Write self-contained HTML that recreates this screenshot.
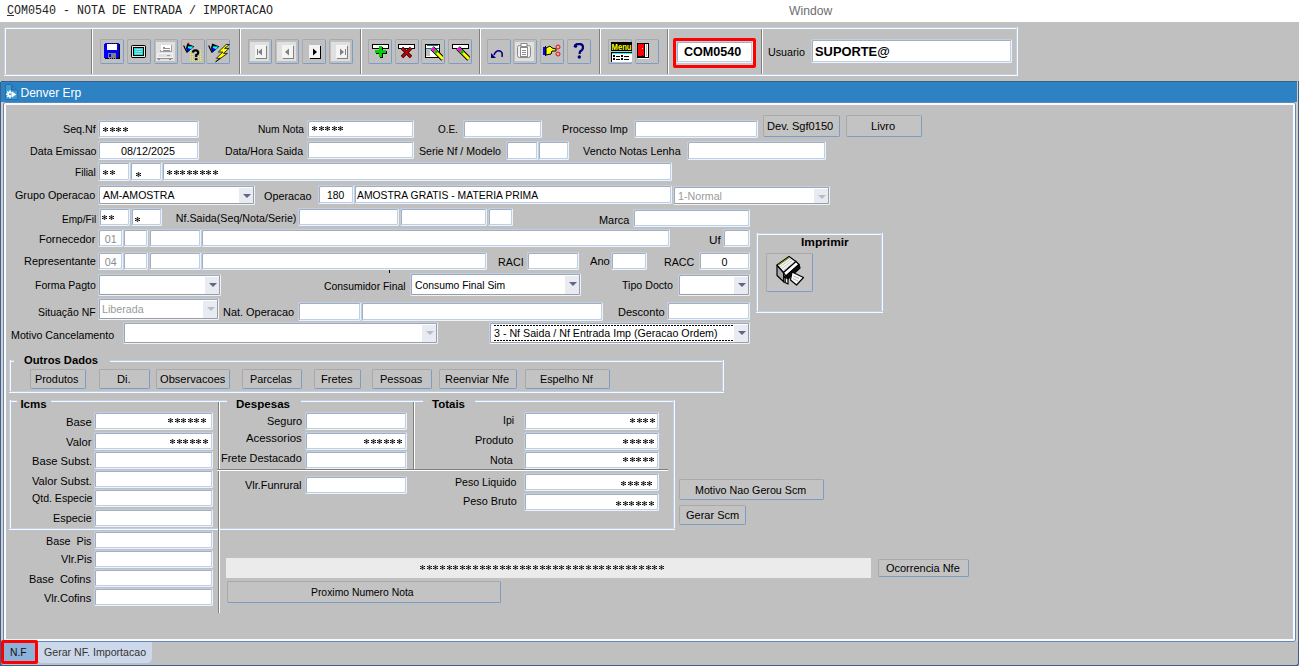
<!DOCTYPE html>
<html><head><meta charset="utf-8"><title>COM0540</title>
<style>
html,body{margin:0;padding:0;}
body{width:1299px;height:666px;overflow:hidden;position:relative;background:#c0c0c0;font-family:"Liberation Sans",sans-serif;font-size:10.7px;color:#000;}
div,svg{position:absolute;box-sizing:border-box;}
.l{white-space:pre;line-height:13px;}
.ln{}
.f{background:#fff;border:1px solid;border-color:#bdd0ea #eef3f9 #eef3f9 #bdd0ea;box-shadow:inset 1px 1px 0 #a9aeb6,inset -1px -1px 0 #bdd0ea;border-radius:2px;}
.arr{background:#e8ebf2;}
.cbx{background:#fff;border:1px solid;border-color:#bdd0ea #eef3f9 #eef3f9 #bdd0ea;box-shadow:inset 1px 1px 0 #a4a7ad,inset -1px -1px 0 #9a9da3;border-radius:2px;}
.fdot{background:repeating-linear-gradient(90deg,#000 0 2px,transparent 2px 3px);}
.arr i{position:absolute;left:4px;top:6px;width:0;height:0;border-left:4px solid transparent;border-right:4px solid transparent;border-top:4px solid #646680;}
.arr.ad i{border-top-color:#b9bcc6;}
.foc{border:1px dashed #000;}
.b{background:#c3c3c3;border:1px solid;border-color:#a9a9a9 #7c9cc4 #7c9cc4 #a9a9a9;border-radius:2px;}
.tb{background:#c0c0c0;border:1px solid;border-color:#a9a9a9 #7c9cc4 #7c9cc4 #a9a9a9;border-radius:2px;}
.s{overflow:visible;}
</style></head><body>
<svg width="0" height="0" style="position:absolute"><defs>
<g id="st"><rect x="1" y="0" width="1" height="1" fill="rgb(217,217,217)"/><rect x="2" y="0" width="1" height="1" fill="rgb(64,64,64)"/><rect x="3" y="0" width="1" height="1" fill="rgb(217,217,217)"/><rect x="0" y="1" width="1" height="1" fill="rgb(13,13,13)"/><rect x="1" y="1" width="1" height="1" fill="rgb(115,115,115)"/><rect x="2" y="1" width="1" height="1" fill="rgb(102,102,102)"/><rect x="3" y="1" width="1" height="1" fill="rgb(115,115,115)"/><rect x="4" y="1" width="1" height="1" fill="rgb(13,13,13)"/><rect x="0" y="2" width="1" height="1" fill="rgb(230,230,230)"/><rect x="1" y="2" width="1" height="1" fill="rgb(115,115,115)"/><rect x="2" y="2" width="1" height="1" fill="rgb(0,0,0)"/><rect x="3" y="2" width="1" height="1" fill="rgb(115,115,115)"/><rect x="4" y="2" width="1" height="1" fill="rgb(230,230,230)"/><rect x="0" y="3" width="1" height="1" fill="rgb(13,13,13)"/><rect x="1" y="3" width="1" height="1" fill="rgb(115,115,115)"/><rect x="2" y="3" width="1" height="1" fill="rgb(102,102,102)"/><rect x="3" y="3" width="1" height="1" fill="rgb(115,115,115)"/><rect x="4" y="3" width="1" height="1" fill="rgb(13,13,13)"/><rect x="1" y="4" width="1" height="1" fill="rgb(217,217,217)"/><rect x="2" y="4" width="1" height="1" fill="rgb(64,64,64)"/><rect x="3" y="4" width="1" height="1" fill="rgb(217,217,217)"/></g>
</defs></svg>
<div style="left:0;top:0;width:1299px;height:22px;background:#fff"></div>
<div class="l" style="top:5px;left:7.00px;transform:scaleX(0.9808);transform-origin:0 0;color:#222;font-family:'Liberation Mono';font-size:11.9px;">COM0540 - NOTA DE ENTRADA / IMPORTACAO</div>
<div class="ln" style="left:7px;top:15px;width:7px;height:1px;background:#333"></div>
<div class="l" style="top:5px;left:789.00px;transform:scaleX(0.9955);transform-origin:0 0;color:#6d6d6d;font-size:12.2px;">Window</div>
<div class="ln" style="left:4px;top:27px;width:1014px;height:1px;background:#bccfe8"></div>
<div class="ln" style="left:4px;top:27px;width:1px;height:49px;background:#bccfe8"></div>
<div class="ln" style="left:4px;top:75px;width:1014px;height:1px;background:#f7faff"></div>
<div class="ln" style="left:1017px;top:27px;width:1px;height:49px;background:#f7faff"></div>
<div class="ln" style="left:5px;top:28px;width:1012px;height:1px;background:#f7faff"></div>
<div class="ln" style="left:5px;top:28px;width:1px;height:47px;background:#f7faff"></div>
<div class="ln" style="left:5px;top:74px;width:1012px;height:1px;background:#bccfe8"></div>
<div class="ln" style="left:1016px;top:28px;width:1px;height:47px;background:#bccfe8"></div>
<div class="ln" style="left:91px;top:29px;width:1px;height:45px;background:#808080"></div>
<div class="ln" style="left:92px;top:29px;width:1px;height:45px;background:#ffffff"></div>
<div class="ln" style="left:239px;top:29px;width:1px;height:45px;background:#808080"></div>
<div class="ln" style="left:240px;top:29px;width:1px;height:45px;background:#ffffff"></div>
<div class="ln" style="left:360px;top:29px;width:1px;height:45px;background:#808080"></div>
<div class="ln" style="left:361px;top:29px;width:1px;height:45px;background:#ffffff"></div>
<div class="ln" style="left:479px;top:29px;width:1px;height:45px;background:#808080"></div>
<div class="ln" style="left:480px;top:29px;width:1px;height:45px;background:#ffffff"></div>
<div class="ln" style="left:599px;top:29px;width:1px;height:45px;background:#808080"></div>
<div class="ln" style="left:600px;top:29px;width:1px;height:45px;background:#ffffff"></div>
<div class="ln" style="left:667px;top:29px;width:1px;height:45px;background:#808080"></div>
<div class="ln" style="left:668px;top:29px;width:1px;height:45px;background:#ffffff"></div>
<div class="ln" style="left:761px;top:29px;width:1px;height:45px;background:#808080"></div>
<div class="ln" style="left:762px;top:29px;width:1px;height:45px;background:#ffffff"></div>
<div class="tb" style="left:100px;top:39px;width:24px;height:25px;"></div>
<div class="tb" style="left:127px;top:39px;width:24px;height:25px;"></div>
<div class="tb" style="left:154px;top:39px;width:24px;height:25px;"></div>
<div class="tb" style="left:181px;top:39px;width:24px;height:25px;"></div>
<div class="tb" style="left:206px;top:39px;width:24px;height:25px;"></div>
<div class="tb" style="left:248px;top:39px;width:24px;height:25px;"></div>
<div class="tb" style="left:275px;top:39px;width:24px;height:25px;"></div>
<div class="tb" style="left:302px;top:39px;width:24px;height:25px;"></div>
<div class="tb" style="left:329px;top:39px;width:24px;height:25px;"></div>
<div class="tb" style="left:368px;top:39px;width:24px;height:25px;"></div>
<div class="tb" style="left:395px;top:39px;width:24px;height:25px;"></div>
<div class="tb" style="left:421px;top:39px;width:24px;height:25px;"></div>
<div class="tb" style="left:448px;top:39px;width:24px;height:25px;"></div>
<div class="tb" style="left:487px;top:39px;width:24px;height:25px;"></div>
<div class="tb" style="left:513px;top:39px;width:24px;height:25px;"></div>
<div class="tb" style="left:540px;top:39px;width:24px;height:25px;"></div>
<div class="tb" style="left:567px;top:39px;width:24px;height:25px;"></div>
<div class="tb" style="left:608px;top:39px;width:24px;height:25px;"></div>
<div class="tb" style="left:635px;top:39px;width:24px;height:25px;"></div>
<div style="left:156px;top:42px;width:19px;height:19px;background:#e0e0e0"></div>
<div style="left:250px;top:42px;width:19px;height:19px;background:#e0e0e0"></div>
<div style="left:277px;top:42px;width:19px;height:19px;background:#e0e0e0"></div>
<div style="left:331px;top:42px;width:19px;height:19px;background:#e0e0e0"></div>
<div style="left:515px;top:42px;width:19px;height:19px;background:#e0e0e0"></div>
<svg style="left:104px;top:43px;" width="17" height="17" shape-rendering="crispEdges"><rect x="0" y="0" width="16" height="16" fill="#000"/><rect x="0" y="0" width="15" height="15" fill="#0000ff"/><rect x="3" y="1" width="10" height="6" fill="#fff"/><rect x="4" y="0" width="1" height="1" fill="#000"/><rect x="6" y="0" width="1" height="1" fill="#000"/><rect x="8" y="0" width="1" height="1" fill="#000"/><rect x="10" y="0" width="1" height="1" fill="#000"/><rect x="12" y="0" width="1" height="1" fill="#000"/><rect x="1" y="3" width="1" height="1" fill="#000"/><rect x="4" y="10" width="8" height="6" fill="#808080"/><rect x="5" y="11" width="2" height="3" fill="#0000ff"/><rect x="4" y="15" width="1" height="1" fill="#000"/><rect x="6" y="15" width="1" height="1" fill="#000"/><rect x="8" y="15" width="1" height="1" fill="#000"/><rect x="10" y="15" width="1" height="1" fill="#000"/><rect x="0" y="0" width="1" height="1" fill="#c0c0c0"/><rect x="15" y="0" width="1" height="1" fill="#c0c0c0"/><rect x="0" y="15" width="1" height="1" fill="#c0c0c0"/></svg>
<svg style="left:131px;top:45px;shape-rendering:auto" width="15" height="13" shape-rendering="crispEdges"><rect x="0" y="0" width="15" height="13" rx="2" fill="#000"/><rect x="1" y="1" width="13" height="11" fill="#e8e8e8"/><rect x="2" y="2" width="11" height="9" fill="#000"/><rect x="3" y="3" width="9" height="7" fill="#00e8e8"/><rect x="4" y="4" width="7" height="1" fill="#c8c8c8"/><rect x="4" y="6" width="7" height="1" fill="#c8c8c8"/><rect x="4" y="8" width="7" height="1" fill="#c8c8c8"/></svg>
<svg style="left:157px;top:44px;" width="16" height="16" shape-rendering="crispEdges"><rect x="4" y="1" width="11" height="7" fill="#fff"/><rect x="4" y="7" width="11" height="1" fill="#a0a0a0"/><rect x="3" y="6" width="1" height="2" fill="#a0a0a0"/><rect x="14" y="1" width="1" height="7" fill="#a0a0a0"/><rect x="6" y="3" width="2" height="1" fill="#909090"/><rect x="6" y="4" width="7" height="1" fill="#909090"/><rect x="6" y="6" width="7" height="1" fill="#909090"/><rect x="0" y="9" width="16" height="5" fill="#f4f4f4"/><rect x="1" y="10" width="14" height="3" fill="#e0e0e0"/><rect x="10" y="11" width="3" height="1" fill="#a0a0a0"/><rect x="0" y="14" width="16" height="1" fill="#909090"/><rect x="1" y="15" width="2" height="1" fill="#909090"/><rect x="12" y="15" width="2" height="1" fill="#909090"/></svg>
<svg style="left:181px;top:39px;shape-rendering:auto" width="24" height="24" shape-rendering="crispEdges"><path d="M2.6 6.6 L6 13.6" stroke="#000" stroke-width="1.2"/><path d="M6.2 4.6 L13.4 7.6 L6.2 13.8 L5 9 Z" fill="#000"/><path d="M5.9 8.6 L10.2 10.2 L6.6 13 Z" fill="#0000ff"/><path d="M7.2 7.2 L12.4 7.6 L10 10.2 L6.8 9 Z" fill="#00ffff"/><circle cx="7.4" cy="4.3" r="0.9" fill="#ff0000"/><rect x="9" y="11" width="1" height="1" fill="#ffff00"/><rect x="9" y="13" width="1" height="1" fill="#ffff00"/><rect x="9" y="15" width="1" height="1" fill="#ffff00"/><rect x="9" y="17" width="1" height="1" fill="#ffff00"/><rect x="9" y="19" width="1" height="1" fill="#ffff00"/><rect x="9" y="21" width="1" height="1" fill="#ffff00"/><rect x="11" y="11" width="1" height="1" fill="#ffff00"/><rect x="11" y="13" width="1" height="1" fill="#ffff00"/><rect x="11" y="15" width="1" height="1" fill="#ffff00"/><rect x="11" y="17" width="1" height="1" fill="#ffff00"/><rect x="11" y="19" width="1" height="1" fill="#ffff00"/><rect x="11" y="21" width="1" height="1" fill="#ffff00"/><rect x="13" y="11" width="1" height="1" fill="#ffff00"/><rect x="13" y="21" width="1" height="1" fill="#ffff00"/><rect x="15" y="11" width="1" height="1" fill="#ffff00"/><rect x="15" y="21" width="1" height="1" fill="#ffff00"/><rect x="17" y="11" width="1" height="1" fill="#ffff00"/><rect x="17" y="13" width="1" height="1" fill="#ffff00"/><rect x="17" y="15" width="1" height="1" fill="#ffff00"/><rect x="17" y="17" width="1" height="1" fill="#ffff00"/><rect x="17" y="19" width="1" height="1" fill="#ffff00"/><rect x="17" y="21" width="1" height="1" fill="#ffff00"/><rect x="19" y="11" width="1" height="1" fill="#ffff00"/><rect x="19" y="13" width="1" height="1" fill="#ffff00"/><rect x="19" y="15" width="1" height="1" fill="#ffff00"/><rect x="19" y="17" width="1" height="1" fill="#ffff00"/><rect x="19" y="19" width="1" height="1" fill="#ffff00"/><rect x="19" y="21" width="1" height="1" fill="#ffff00"/><path d="M11.8 13.6 Q12 11.4 14.6 11.4 Q17.4 11.4 17.2 13.8 Q17 15.4 15.2 16 L15.2 18" fill="none" stroke="#000" stroke-width="2.2"/><rect x="13.9" y="19.2" width="2.6" height="2" fill="#000"/></svg>
<svg style="left:206px;top:39px;shape-rendering:auto" width="24" height="24" shape-rendering="crispEdges"><path d="M2.6 6.6 L6 13.6" stroke="#000" stroke-width="1.2"/><path d="M6.2 4.6 L13.4 7.6 L6.2 13.8 L5 9 Z" fill="#000"/><path d="M5.9 8.6 L10.2 10.2 L6.6 13 Z" fill="#0000ff"/><path d="M7.2 7.2 L12.4 7.6 L10 10.2 L6.8 9 Z" fill="#00ffff"/><path d="M20.2 5.5 L12.4 13 L16.8 13 L10.2 19.4 L14.2 19.4 L9.6 22.8 L21.4 14.4 L17.4 14.4 L23 9.4 L18.6 9.4 L23.4 5.5 Z" fill="#ffff00" stroke="#000" stroke-width="0.8" stroke-linejoin="round"/><path d="M13.2 13.4 L11.4 14.2 M11 18.8 L9.4 19.4" stroke="#909090" stroke-width="1"/></svg>
<svg style="left:255px;top:45px;" width="13" height="15" shape-rendering="crispEdges"><rect x="0" y="0" width="11" height="13" fill="#f4f4f4"/><rect x="11" y="1" width="1" height="13" fill="#808080"/><rect x="1" y="13" width="11" height="1" fill="#808080"/><rect x="2" y="4" width="1" height="6" fill="#808080"/><path d="M3 7 L7 3.5 L7 10.5 Z" fill="#808080" shape-rendering="auto"/></svg>
<svg style="left:282px;top:45px;" width="13" height="15" shape-rendering="crispEdges"><rect x="0" y="0" width="11" height="13" fill="#f4f4f4"/><rect x="11" y="1" width="1" height="13" fill="#808080"/><rect x="1" y="13" width="11" height="1" fill="#808080"/><path d="M3 7 L7 3.5 L7 10.5 Z" fill="#808080" shape-rendering="auto"/></svg>
<svg style="left:309px;top:45px;" width="13" height="15" shape-rendering="crispEdges"><rect x="0" y="0" width="11" height="13" fill="#f4f4f4"/><rect x="11" y="1" width="1" height="13" fill="#000"/><rect x="1" y="13" width="11" height="1" fill="#000"/><path d="M8 7 L4 3.5 L4 10.5 Z" fill="#000" shape-rendering="auto"/></svg>
<svg style="left:336px;top:45px;" width="13" height="15" shape-rendering="crispEdges"><rect x="0" y="0" width="11" height="13" fill="#f4f4f4"/><rect x="11" y="1" width="1" height="13" fill="#808080"/><rect x="1" y="13" width="11" height="1" fill="#808080"/><rect x="9" y="4" width="1" height="6" fill="#808080"/><path d="M8 7 L4 3.5 L4 10.5 Z" fill="#808080" shape-rendering="auto"/></svg>
<svg style="left:372px;top:44px;" width="18" height="15" shape-rendering="crispEdges"><rect x="0" y="0" width="17" height="5" fill="#000"/><rect x="1" y="1" width="15" height="3" fill="#fff"/><path d="M7 2 h3 v4 h4 v3 h-4 v4 h-3 v-4 h-4 v-3 h4z" fill="#000" transform="translate(0.5 0.5)"/><path d="M7 2 h3 v4 h4 v3 h-4 v4 h-3 v-4 h-4 v-3 h4z" fill="#00d000"/></svg>
<svg style="left:398px;top:44px;" width="18" height="15" shape-rendering="crispEdges"><rect x="0" y="0" width="17" height="5" fill="#000"/><rect x="1" y="1" width="15" height="3" fill="#fff"/><path d="M4 4 L13 13 M13 4 L4 13" stroke="#000" stroke-width="3.2" shape-rendering="auto"/><path d="M4 4 L13 13 M13 4 L4 13" stroke="#c00000" stroke-width="2.2" shape-rendering="auto"/></svg>
<svg style="left:425px;top:44px;" width="18" height="18" shape-rendering="crispEdges"><rect x="0" y="0" width="15" height="14" fill="#000"/><rect x="1" y="1" width="13" height="12" fill="#fff"/><rect x="2" y="1" width="11" height="1" fill="#008080"/><rect x="1" y="4" width="13" height="1" fill="#008080"/><rect x="1" y="5" width="4" height="7" fill="#c0c0c0"/><g transform="translate(2 0)"><path d="M5 4 L16 15" stroke="#000" stroke-width="5" shape-rendering="auto"/><path d="M5 4 L16 15" stroke="#ffff00" stroke-width="3" shape-rendering="auto"/><path d="M5 4 L8 7" stroke="#ff00ff" stroke-width="3" shape-rendering="auto"/><path d="M8 7 L10 9" stroke="#00c000" stroke-width="3" shape-rendering="auto"/></g></svg>
<svg style="left:452px;top:44px;" width="18" height="18" shape-rendering="crispEdges"><rect x="0" y="0" width="17" height="5" fill="#000"/><rect x="1" y="1" width="15" height="3" fill="#fff"/><g transform="translate(1 0)"><path d="M5 4 L16 15" stroke="#000" stroke-width="5" shape-rendering="auto"/><path d="M5 4 L16 15" stroke="#ffff00" stroke-width="3" shape-rendering="auto"/><path d="M5 4 L8 7" stroke="#ff00ff" stroke-width="3" shape-rendering="auto"/><path d="M8 7 L10 9" stroke="#00c000" stroke-width="3" shape-rendering="auto"/></g></svg>
<svg style="left:491px;top:48px;" width="14" height="12" shape-rendering="crispEdges"><path d="M3 7 Q5 2 9 3 Q12 4 11 9" fill="none" stroke="#000080" stroke-width="1.5" shape-rendering="auto"/><path d="M0 5 L0 10 L5 10 Z" fill="#000080" shape-rendering="auto"/></svg>
<svg style="left:517px;top:43px;" width="15" height="16" shape-rendering="crispEdges"><rect x="0.5" y="2.5" width="13" height="12" rx="2" fill="#f0f0f0" stroke="#8a8a8a" shape-rendering="auto"/><rect x="4" y="0.5" width="6" height="3" fill="#fff" stroke="#8a8a8a" shape-rendering="auto"/><rect x="3.5" y="4.5" width="7" height="9" fill="#fff" stroke="#8a8a8a" shape-rendering="auto"/><rect x="5" y="7" width="4" height="1" fill="#8a8a8a"/><rect x="5" y="9" width="4" height="1" fill="#8a8a8a"/><rect x="5" y="11" width="4" height="1" fill="#8a8a8a"/></svg>
<svg style="left:543px;top:44px;" width="18" height="14" shape-rendering="crispEdges"><rect x="0" y="3" width="2" height="8" fill="#0000ff"/><rect x="2" y="2" width="1" height="10" fill="#000"/><path d="M3 4 L7 2 L9 4 L13 5 L13 7 L9 7 L8 10 L3 11 Z" fill="#ffff00" stroke="#000" stroke-width="1" shape-rendering="auto"/><circle cx="15" cy="3" r="2" fill="none" stroke="#ff0000" stroke-width="1" shape-rendering="auto"/><circle cx="15" cy="10" r="2" fill="none" stroke="#ff0000" stroke-width="1" shape-rendering="auto"/></svg>
<svg style="left:573px;top:43px;" width="12" height="16" shape-rendering="crispEdges"><path d="M1.5 4 Q2 0.8 6 0.8 Q10 1 10 4.5 Q10 7 7 8.5 L6.5 11" fill="none" stroke="#000080" stroke-width="2.2" shape-rendering="auto"/><circle cx="2.6" cy="3.2" r="1.6" fill="#000080" shape-rendering="auto"/><circle cx="6.3" cy="14" r="1.7" fill="#000080" shape-rendering="auto"/></svg>
<svg style="left:611px;top:42px;" width="21" height="20" shape-rendering="crispEdges"><rect x="0" y="0" width="21" height="9" fill="#000"/><text x="0.5" y="8" font-family="Liberation Sans" font-weight="bold" font-size="9" fill="#ffff00" textLength="20" lengthAdjust="spacingAndGlyphs" shape-rendering="auto">Menu</text><rect x="0" y="10" width="21" height="1" fill="#000"/><rect x="1" y="11" width="20" height="1" fill="#00ffff"/><rect x="0" y="10" width="1" height="10" fill="#000"/><rect x="1" y="12" width="20" height="8" fill="#fff"/><rect x="2" y="13" width="2" height="2" fill="#000"/><rect x="5" y="14" width="4" height="1" fill="#000"/><rect x="10" y="13" width="2" height="2" fill="#000"/><rect x="13" y="14" width="5" height="1" fill="#000"/><rect x="2" y="16" width="2" height="2" fill="#000"/><rect x="5" y="17" width="4" height="1" fill="#000"/><rect x="10" y="16" width="2" height="2" fill="#000"/><rect x="13" y="17" width="5" height="1" fill="#000"/></svg>
<svg style="left:637px;top:43px;" width="14" height="16" shape-rendering="crispEdges"><rect x="0" y="0" width="12" height="15" fill="#000"/><rect x="8" y="1" width="3" height="13" fill="#fff"/><rect x="9" y="1" width="1" height="12" fill="#c0c0c0"/><rect x="1" y="1" width="6" height="12" fill="#ff0000"/><rect x="5" y="12" width="1" height="1" fill="#000"/><rect x="5" y="5" width="1" height="1" fill="#ffff00"/><rect x="1" y="15" width="11" height="1" fill="#fff"/></svg>
<div style="left:673px;top:38px;width:83px;height:30px;border:3px solid #ff0000;border-radius:2px"></div>
<div style="left:676px;top:41px;width:77px;height:24px;background:#c8c8c8"></div>
<div class="f" style="left:676px;top:41px;width:77px;height:22px;"></div>
<div class="l" style="top:45px;left:684.30px;transform:scaleX(0.9393);transform-origin:0 0;font-weight:bold;font-size:13.4px;">COM0540</div>
<div class="l" style="top:46px;left:767.50px;transform:scaleX(1.0028);transform-origin:0 0;">Usuario</div>
<div class="f" style="left:811px;top:39px;width:201px;height:24px;"></div>
<div class="l" style="top:45px;left:815.00px;transform:scaleX(0.9610);transform-origin:0 0;font-weight:bold;font-size:13.4px;">SUPORTE@</div>
<div style="left:0px;top:81px;width:1299px;height:585px;border:1px solid #3d5f8e;border-top:none;border-radius:0 0 3px 3px"></div>
<div style="left:1px;top:81px;width:1296px;height:21px;background:#2c82c3;border-top:1px solid #3b5f8d"></div>
<div class="ln" style="left:0px;top:81px;width:1px;height:585px;background:#3d5f8e"></div>
<div style="left:1297px;top:81px;width:1px;height:21px;background:#cfcbc4"></div>
<div style="left:0px;top:81px;width:1px;height:1px;background:#7fe0f0"></div>
<svg style="left:5px;top:84px" width="14" height="16"><path d="M0.5 0.5 H6.5 V6.5 H12.5 V15.5 H0.5 Z" fill="#3b9ad8" stroke="#2a6ea6"/><path d="M7.5 1.5 L11.5 5.5 H7.5 Z" fill="#2f86c6" stroke="#2a6ea6" stroke-width="0.8"/><g fill="#fff"><circle cx="5" cy="10.3" r="2.7"/><rect x="4.3" y="6.3" width="1.4" height="8"/><rect x="1" y="9.6" width="8" height="1.4"/><rect x="4.3" y="6.3" width="1.4" height="8" transform="rotate(45 5 10.3)"/><rect x="4.3" y="6.3" width="1.4" height="8" transform="rotate(-45 5 10.3)"/></g><circle cx="5" cy="10.3" r="1" fill="#3b9ad8"/><rect x="6.6" y="6.5" width="5.4" height="8" fill="#3b9ad8"/><path d="M7 7.5 L11.3 10.5 L7 13.5 Z" fill="#fff"/></svg>
<div class="l" style="top:87px;left:20.50px;transform:scaleX(1.0000);transform-origin:0 0;color:#fff;font-size:12px;">Denver Erp</div>
<div style="left:1px;top:102px;width:2px;height:540px;background:#d3cec6"></div>
<div style="left:1296px;top:102px;width:2px;height:540px;background:#d3cec6"></div>
<div style="left:3px;top:102px;width:1293px;height:540px;border:1px solid #6286b6;border-radius:3px"></div>
<div style="left:4px;top:103px;width:1291px;height:538px;border:2px solid #f8fbff;border-radius:2px"></div>
<div class="l" style="top:123px;left:63.00px;transform:scaleX(1.0030);transform-origin:0 0;">Seq.Nf</div>
<div class="f" style="left:98px;top:120px;width:101px;height:18px;"></div>
<svg class="s" shape-rendering="crispEdges" style="left:103px;top:127px" width="33" height="5"><use href="#st" x="0" y="0"/><use href="#st" x="7" y="0"/><use href="#st" x="13" y="0"/><use href="#st" x="20" y="0"/></svg>
<div class="l" style="top:123px;left:257.54px;transform:scaleX(0.9553);transform-origin:0 0;">Num Nota</div>
<div class="f" style="left:307px;top:120px;width:107px;height:18px;"></div>
<svg class="s" shape-rendering="crispEdges" style="left:312px;top:126px" width="39" height="5"><use href="#st" x="0" y="0"/><use href="#st" x="7" y="0"/><use href="#st" x="13" y="0"/><use href="#st" x="20" y="0"/><use href="#st" x="26" y="0"/></svg>
<div class="l" style="top:123px;left:438.00px;transform:scaleX(0.9286);transform-origin:0 0;">O.E.</div>
<div class="f" style="left:463px;top:120px;width:79px;height:18px;"></div>
<div class="l" style="top:123px;left:562.39px;transform:scaleX(1.0062);transform-origin:0 0;">Processo Imp</div>
<div class="f" style="left:634px;top:120px;width:124px;height:18px;"></div>
<div class="b" style="left:763px;top:115px;width:77px;height:22px;"></div>
<div class="l" style="top:120px;left:767.27px;transform:scaleX(1.0349);transform-origin:0 0;">Dev. Sgf0150</div>
<div class="b" style="left:846px;top:115px;width:76px;height:22px;"></div>
<div class="l" style="top:120px;left:871.46px;transform:scaleX(1.0409);transform-origin:0 0;">Livro</div>
<div class="l" style="top:145px;left:30.00px;transform:scaleX(1.0000);transform-origin:0 0;">Data Emissao</div>
<div class="f" style="left:98px;top:141px;width:101px;height:19px;"></div>
<div class="l" style="top:145px;left:121.40px;transform:scaleX(1.0113);transform-origin:0 0;">08/12/2025</div>
<div class="l" style="top:145px;left:225.31px;transform:scaleX(0.9885);transform-origin:0 0;">Data/Hora Saida</div>
<div class="f" style="left:307px;top:141px;width:107px;height:18px;"></div>
<div class="l" style="top:145px;left:419.30px;transform:scaleX(0.9927);transform-origin:0 0;">Serie Nf / Modelo</div>
<div class="f" style="left:506px;top:141px;width:32px;height:19px;"></div>
<div class="f" style="left:538px;top:141px;width:31px;height:19px;"></div>
<div class="l" style="top:145px;left:582.90px;transform:scaleX(1.0146);transform-origin:0 0;">Vencto Notas Lenha</div>
<div class="f" style="left:687px;top:141px;width:139px;height:19px;"></div>
<div class="l" style="top:166px;left:75.26px;transform:scaleX(0.9429);transform-origin:0 0;">Filial</div>
<div class="f" style="left:98px;top:162px;width:32px;height:19px;"></div>
<svg class="s" shape-rendering="crispEdges" style="left:103px;top:170px" width="20" height="5"><use href="#st" x="0" y="0"/><use href="#st" x="7" y="0"/></svg>
<div class="f" style="left:130px;top:162px;width:32px;height:19px;"></div>
<svg class="s" shape-rendering="crispEdges" style="left:136px;top:172px" width="13" height="5"><use href="#st" x="0" y="0"/></svg>
<div class="f" style="left:162px;top:162px;width:510px;height:19px;"></div>
<svg class="s" shape-rendering="crispEdges" style="left:167px;top:170px" width="59" height="5"><use href="#st" x="0" y="0"/><use href="#st" x="7" y="0"/><use href="#st" x="13" y="0"/><use href="#st" x="20" y="0"/><use href="#st" x="26" y="0"/><use href="#st" x="33" y="0"/><use href="#st" x="39" y="0"/><use href="#st" x="46" y="0"/></svg>
<div class="l" style="top:189px;left:15.30px;transform:scaleX(1.0063);transform-origin:0 0;">Grupo Operacao</div>
<div class="cbx" style="left:98px;top:185px;width:157px;height:20px;"></div>
<div class="arr" style="left:239px;top:188px;width:14px;height:15px;"><i style="top:6px"></i></div>
<div class="l" style="top:189px;left:103.00px;transform:scaleX(0.9863);transform-origin:0 0;">AM-AMOSTRA</div>
<div class="l" style="top:190px;left:264.40px;transform:scaleX(1.0106);transform-origin:0 0;">Operacao</div>
<div class="f" style="left:318px;top:185px;width:36px;height:19px;"></div>
<div class="l" style="top:189px;left:326.64px;transform:scaleX(0.9647);transform-origin:0 0;">180</div>
<div class="f" style="left:354px;top:185px;width:318px;height:19px;"></div>
<div class="l" style="top:189px;left:357.00px;transform:scaleX(0.9701);transform-origin:0 0;">AMOSTRA GRATIS - MATERIA PRIMA</div>
<div class="cbx" style="left:673px;top:186px;width:157px;height:19px;"></div>
<div class="arr ad" style="left:814px;top:189px;width:14px;height:14px;"><i style="top:6px"></i></div>
<div class="l" style="top:190px;left:678.00px;color:#9a9a9a;">1-Normal</div>
<div class="l" style="top:213px;left:62.06px;transform:scaleX(0.9429);transform-origin:0 0;">Emp/Fil</div>
<div class="f" style="left:99px;top:208px;width:31px;height:18px;"></div>
<svg class="s" shape-rendering="crispEdges" style="left:102px;top:215px" width="20" height="5"><use href="#st" x="0" y="0"/><use href="#st" x="7" y="0"/></svg>
<div class="f" style="left:131px;top:208px;width:31px;height:18px;"></div>
<svg class="s" shape-rendering="crispEdges" style="left:135px;top:217px" width="13" height="5"><use href="#st" x="0" y="0"/></svg>
<div class="l" style="top:212px;left:175.80px;">Nf.Saida(Seq/Nota/Serie)</div>
<div class="f" style="left:298px;top:208px;width:101px;height:18px;"></div>
<div class="f" style="left:400px;top:208px;width:87px;height:18px;"></div>
<div class="f" style="left:488px;top:208px;width:25px;height:18px;"></div>
<div class="l" style="top:214px;left:598.98px;transform:scaleX(1.0207);transform-origin:0 0;">Marca</div>
<div class="f" style="left:633px;top:209px;width:117px;height:18px;"></div>
<div class="l" style="top:233px;left:39.27px;transform:scaleX(1.0315);transform-origin:0 0;">Fornecedor</div>
<div class="f" style="left:98px;top:229px;width:25px;height:18px;"></div>
<div class="l" style="top:233px;left:104.80px;color:#8c8c8c;">01</div>
<div class="f" style="left:123px;top:229px;width:25px;height:18px;"></div>
<div class="f" style="left:149px;top:229px;width:52px;height:18px;"></div>
<div class="f" style="left:201px;top:229px;width:469px;height:18px;"></div>
<div class="l" style="top:234px;left:708.90px;transform:scaleX(1.1000);transform-origin:0 0;">Uf</div>
<div class="f" style="left:723px;top:229px;width:27px;height:18px;"></div>
<div class="l" style="top:255px;left:23.98px;transform:scaleX(1.0246);transform-origin:0 0;">Representante</div>
<div class="f" style="left:98px;top:252px;width:25px;height:18px;"></div>
<div class="l" style="top:256px;left:104.80px;color:#8c8c8c;">04</div>
<div class="f" style="left:123px;top:252px;width:25px;height:18px;"></div>
<div class="f" style="left:149px;top:252px;width:52px;height:18px;"></div>
<div class="f" style="left:201px;top:252px;width:286px;height:18px;"></div>
<div class="ln" style="left:389px;top:270px;width:1px;height:3px;background:#000"></div>
<div class="l" style="top:256px;left:498.40px;transform:scaleX(1.0042);transform-origin:0 0;">RACI</div>
<div class="f" style="left:527px;top:252px;width:52px;height:18px;"></div>
<div class="l" style="top:255px;left:590.00px;transform:scaleX(1.0421);transform-origin:0 0;">Ano</div>
<div class="f" style="left:611px;top:252px;width:36px;height:18px;"></div>
<div class="l" style="top:256px;left:664.00px;transform:scaleX(1.0000);transform-origin:0 0;">RACC</div>
<div class="f" style="left:699px;top:252px;width:51px;height:18px;"></div>
<div class="l" style="top:256px;left:721.50px;">0</div>
<div class="ln" style="left:756px;top:233px;width:127px;height:1px;background:#bccfe8"></div>
<div class="ln" style="left:756px;top:234px;width:127px;height:1px;background:#f7faff"></div>
<div class="ln" style="left:756px;top:233px;width:1px;height:80px;background:#bccfe8"></div>
<div class="ln" style="left:757px;top:233px;width:1px;height:80px;background:#f7faff"></div>
<div class="ln" style="left:881px;top:233px;width:1px;height:80px;background:#bccfe8"></div>
<div class="ln" style="left:882px;top:233px;width:1px;height:80px;background:#f7faff"></div>
<div class="ln" style="left:756px;top:311px;width:127px;height:1px;background:#bccfe8"></div>
<div class="ln" style="left:756px;top:312px;width:127px;height:1px;background:#f7faff"></div>
<div class="l" style="top:236px;left:801.30px;transform:scaleX(1.0370);transform-origin:0 0;font-weight:bold;font-size:11.5px;">Imprimir</div>
<div class="b" style="left:766px;top:253px;width:47px;height:39px;"></div>
<svg style="left:775px;top:255px" width="31" height="32"><g stroke="#000" stroke-width="1.2" stroke-linejoin="round"><path d="M2 10 L8.5 17.5 L9 27 L2 20.5 Z" fill="#a8a8a8"/><path d="M14 1.5 L2 10 L8.5 17.5 L21 6.5 Z" fill="#f4f4f4"/><path d="M8.5 17.5 L21 6.5 L24 9.5 L11 21 Z" fill="#fff"/><path d="M11 21 L24 9.5 L25 13 L13 24 Z" fill="#111"/><path d="M17 17 L28.5 22.5 L21.5 30 L15.5 25 Z" fill="#f8f8f8"/><path d="M9 21 L9 27 L13 29 L13 24 Z" fill="#eee"/></g><path d="M3.5 10 L14 2.8" stroke="#8a8a00" stroke-width="1.1"/><g stroke="#b8b8b8" stroke-width="0.7"><path d="M5.5 11.5 L16 4 M7 13.5 L17.5 5.5 M8.5 15.5 L19 7"/></g><g stroke="#a0a0a0" stroke-width="0.8"><path d="M18.5 21 L24 23.5 M18 23.5 L23 26"/></g><path d="M10.5 22 L10.5 27.5" stroke="#000" stroke-width="0.8"/></svg>
<div class="l" style="top:279px;left:35.02px;transform:scaleX(0.9836);transform-origin:0 0;">Forma Pagto</div>
<div class="cbx" style="left:98px;top:274px;width:123px;height:22px;"></div>
<div class="arr" style="left:205px;top:277px;width:14px;height:17px;"><i style="top:6px"></i></div>
<div class="l" style="top:280px;left:324.20px;transform:scaleX(0.9738);transform-origin:0 0;">Consumidor Final</div>
<div class="cbx" style="left:410px;top:273px;width:171px;height:23px;"></div>
<div class="arr" style="left:565px;top:276px;width:14px;height:18px;"><i style="top:6px"></i></div>
<div class="l" style="top:279px;left:415.30px;transform:scaleX(0.9677);transform-origin:0 0;">Consumo Final Sim</div>
<div class="l" style="top:279px;left:622.30px;transform:scaleX(0.9941);transform-origin:0 0;">Tipo Docto</div>
<div class="cbx" style="left:678px;top:274px;width:72px;height:22px;"></div>
<div class="arr" style="left:734px;top:277px;width:14px;height:17px;"><i style="top:6px"></i></div>
<div class="l" style="top:306px;left:37.90px;transform:scaleX(0.9797);transform-origin:0 0;">Situação NF</div>
<div class="cbx" style="left:98px;top:298px;width:121px;height:22px;"></div>
<div class="arr ad" style="left:203px;top:301px;width:14px;height:17px;"><i style="top:6px"></i></div>
<div class="l" style="top:303px;left:102.00px;color:#9a9a9a;">Liberada</div>
<div class="l" style="top:306px;left:223.38px;transform:scaleX(1.0235);transform-origin:0 0;">Nat. Operacao</div>
<div class="f" style="left:298px;top:302px;width:63px;height:19px;"></div>
<div class="f" style="left:361px;top:302px;width:242px;height:19px;"></div>
<div class="l" style="top:306px;left:618.17px;transform:scaleX(1.0318);transform-origin:0 0;">Desconto</div>
<div class="f" style="left:667px;top:302px;width:83px;height:18px;"></div>
<div class="l" style="top:329px;left:11.00px;transform:scaleX(0.9971);transform-origin:0 0;">Motivo Cancelamento</div>
<div class="cbx" style="left:123px;top:322px;width:315px;height:22px;"></div>
<div class="arr ad" style="left:422px;top:325px;width:14px;height:17px;"><i style="top:6px"></i></div>
<div class="cbx" style="left:489px;top:322px;width:261px;height:22px;"></div>
<div class="arr" style="left:734px;top:325px;width:14px;height:17px;"><i style="top:6px"></i></div>
<div class="fdot" style="left:494px;top:325px;width:240px;height:1px;"></div>
<div class="fdot" style="left:494px;top:340px;width:240px;height:1px;"></div>
<div class="l" style="top:327px;left:494.00px;transform:scaleX(0.9982);transform-origin:0 0;">3 - Nf Saida / Nf Entrada Imp (Geracao Ordem)</div>
<div class="ln" style="left:9px;top:360px;width:5px;height:1px;background:#bccfe8"></div>
<div class="ln" style="left:9px;top:361px;width:5px;height:1px;background:#f7faff"></div>
<div class="ln" style="left:110px;top:360px;width:614px;height:1px;background:#bccfe8"></div>
<div class="ln" style="left:110px;top:361px;width:614px;height:1px;background:#f7faff"></div>
<div class="ln" style="left:9px;top:360px;width:1px;height:33px;background:#bccfe8"></div>
<div class="ln" style="left:10px;top:360px;width:1px;height:33px;background:#f7faff"></div>
<div class="ln" style="left:722px;top:360px;width:1px;height:33px;background:#bccfe8"></div>
<div class="ln" style="left:723px;top:360px;width:1px;height:33px;background:#f7faff"></div>
<div class="ln" style="left:9px;top:391px;width:715px;height:1px;background:#bccfe8"></div>
<div class="ln" style="left:9px;top:392px;width:715px;height:1px;background:#f7faff"></div>
<div class="l" style="top:354px;left:24.00px;transform:scaleX(0.9737);transform-origin:0 0;font-weight:bold;font-size:11.5px;">Outros Dados</div>
<div class="b" style="left:30px;top:369px;width:56px;height:20px;"></div>
<div class="l" style="top:373px;left:35.19px;transform:scaleX(1.0143);transform-origin:0 0;">Produtos</div>
<div class="b" style="left:99px;top:369px;width:51px;height:20px;"></div>
<div class="l" style="top:373px;left:116.65px;transform:scaleX(1.0455);transform-origin:0 0;">Di.</div>
<div class="b" style="left:156px;top:369px;width:74px;height:20px;"></div>
<div class="l" style="top:373px;left:160.00px;transform:scaleX(1.0381);transform-origin:0 0;">Observacoes</div>
<div class="b" style="left:242px;top:369px;width:60px;height:20px;"></div>
<div class="l" style="top:373px;left:250.19px;transform:scaleX(1.0073);transform-origin:0 0;">Parcelas</div>
<div class="b" style="left:314px;top:369px;width:47px;height:20px;"></div>
<div class="l" style="top:373px;left:321.26px;transform:scaleX(1.0414);transform-origin:0 0;">Fretes</div>
<div class="b" style="left:372px;top:369px;width:60px;height:20px;"></div>
<div class="l" style="top:373px;left:379.97px;transform:scaleX(1.0325);transform-origin:0 0;">Pessoas</div>
<div class="b" style="left:439px;top:369px;width:78px;height:20px;"></div>
<div class="l" style="top:373px;left:445.17px;transform:scaleX(1.0262);transform-origin:0 0;">Reenviar Nfe</div>
<div class="b" style="left:525px;top:369px;width:85px;height:20px;"></div>
<div class="l" style="top:373px;left:539.99px;transform:scaleX(1.0096);transform-origin:0 0;">Espelho Nf</div>
<div class="ln" style="left:9px;top:400px;width:8px;height:1px;background:#bccfe8"></div>
<div class="ln" style="left:9px;top:401px;width:8px;height:1px;background:#f7faff"></div>
<div class="ln" style="left:51px;top:400px;width:176px;height:1px;background:#bccfe8"></div>
<div class="ln" style="left:51px;top:401px;width:176px;height:1px;background:#f7faff"></div>
<div class="ln" style="left:301px;top:400px;width:122px;height:1px;background:#bccfe8"></div>
<div class="ln" style="left:301px;top:401px;width:122px;height:1px;background:#f7faff"></div>
<div class="ln" style="left:475px;top:400px;width:200px;height:1px;background:#bccfe8"></div>
<div class="ln" style="left:475px;top:401px;width:200px;height:1px;background:#f7faff"></div>
<div class="ln" style="left:9px;top:400px;width:1px;height:130px;background:#bccfe8"></div>
<div class="ln" style="left:10px;top:400px;width:1px;height:130px;background:#f7faff"></div>
<div class="ln" style="left:673px;top:400px;width:1px;height:130px;background:#bccfe8"></div>
<div class="ln" style="left:674px;top:400px;width:1px;height:130px;background:#f7faff"></div>
<div class="ln" style="left:9px;top:528px;width:666px;height:1px;background:#bccfe8"></div>
<div class="ln" style="left:9px;top:529px;width:666px;height:1px;background:#f7faff"></div>
<div class="l" style="top:398px;left:20.40px;transform:scaleX(1.0000);transform-origin:0 0;font-weight:bold;font-size:11.5px;">Icms</div>
<div class="l" style="top:398px;left:236.20px;transform:scaleX(1.0056);transform-origin:0 0;font-weight:bold;font-size:11.5px;">Despesas</div>
<div class="l" style="top:398px;left:432.00px;transform:scaleX(1.0000);transform-origin:0 0;font-weight:bold;font-size:11.5px;">Totais</div>
<div class="ln" style="left:218px;top:402px;width:1px;height:211px;background:#808080"></div>
<div class="ln" style="left:219px;top:402px;width:1px;height:211px;background:#ffffff"></div>
<div class="ln" style="left:413px;top:402px;width:1px;height:67px;background:#808080"></div>
<div class="ln" style="left:414px;top:402px;width:1px;height:67px;background:#ffffff"></div>
<div class="ln" style="left:217px;top:469px;width:451px;height:1px;background:#808080"></div>
<div class="ln" style="left:217px;top:470px;width:451px;height:1px;background:#ffffff"></div>
<div class="l" style="top:416px;left:66.24px;transform:scaleX(1.0609);transform-origin:0 0;">Base</div>
<div class="f" style="left:94px;top:412px;width:119px;height:18px;"></div>
<div class="l" style="top:436px;left:66.40px;transform:scaleX(1.0542);transform-origin:0 0;">Valor</div>
<div class="f" style="left:94px;top:432px;width:119px;height:18px;"></div>
<div class="l" style="top:455px;left:32.26px;transform:scaleX(1.0429);transform-origin:0 0;">Base Subst.</div>
<div class="f" style="left:94px;top:451px;width:119px;height:18px;"></div>
<div class="l" style="top:475px;left:32.20px;transform:scaleX(1.0439);transform-origin:0 0;">Valor Subst.</div>
<div class="f" style="left:94px;top:470px;width:119px;height:18px;"></div>
<div class="l" style="top:492px;left:31.50px;transform:scaleX(0.9869);transform-origin:0 0;">Qtd. Especie</div>
<div class="f" style="left:94px;top:489px;width:119px;height:18px;"></div>
<div class="l" style="top:512px;left:52.98px;transform:scaleX(1.0189);transform-origin:0 0;">Especie</div>
<div class="f" style="left:94px;top:509px;width:119px;height:18px;"></div>
<div class="l" style="top:535px;left:46.39px;transform:scaleX(1.0068);transform-origin:0 0;">Base  Pis</div>
<div class="f" style="left:94px;top:531px;width:119px;height:18px;"></div>
<div class="l" style="top:553px;left:61.00px;transform:scaleX(1.0233);transform-origin:0 0;">Vlr.Pis</div>
<div class="f" style="left:94px;top:550px;width:119px;height:18px;"></div>
<div class="l" style="top:573px;left:29.38px;transform:scaleX(1.0217);transform-origin:0 0;">Base  Cofins</div>
<div class="f" style="left:94px;top:569px;width:119px;height:18px;"></div>
<div class="l" style="top:592px;left:44.20px;transform:scaleX(1.0326);transform-origin:0 0;">Vlr.Cofins</div>
<div class="f" style="left:94px;top:588px;width:119px;height:18px;"></div>
<svg class="s" shape-rendering="crispEdges" style="left:168px;top:418px" width="46" height="5"><use href="#st" x="0" y="0"/><use href="#st" x="7" y="0"/><use href="#st" x="13" y="0"/><use href="#st" x="20" y="0"/><use href="#st" x="26" y="0"/><use href="#st" x="33" y="0"/></svg>
<svg class="s" shape-rendering="crispEdges" style="left:170px;top:439px" width="46" height="5"><use href="#st" x="0" y="0"/><use href="#st" x="7" y="0"/><use href="#st" x="13" y="0"/><use href="#st" x="20" y="0"/><use href="#st" x="26" y="0"/><use href="#st" x="33" y="0"/></svg>
<div class="l" style="top:415px;left:267.00px;transform:scaleX(1.0206);transform-origin:0 0;">Seguro</div>
<div class="f" style="left:305px;top:412px;width:102px;height:18px;"></div>
<div class="l" style="top:432px;left:246.30px;transform:scaleX(1.0654);transform-origin:0 0;">Acessorios</div>
<div class="f" style="left:305px;top:432px;width:102px;height:18px;"></div>
<div class="l" style="top:452px;left:220.98px;transform:scaleX(1.0218);transform-origin:0 0;">Frete Destacado</div>
<div class="f" style="left:305px;top:451px;width:102px;height:18px;"></div>
<div class="l" style="top:479px;left:245.40px;transform:scaleX(1.0236);transform-origin:0 0;">Vlr.Funrural</div>
<div class="f" style="left:305px;top:476px;width:102px;height:18px;"></div>
<svg class="s" shape-rendering="crispEdges" style="left:364px;top:439px" width="46" height="5"><use href="#st" x="0" y="0"/><use href="#st" x="7" y="0"/><use href="#st" x="13" y="0"/><use href="#st" x="20" y="0"/><use href="#st" x="26" y="0"/><use href="#st" x="33" y="0"/></svg>
<div class="l" style="top:414px;left:502.62px;transform:scaleX(0.9800);transform-origin:0 0;">Ipi</div>
<div class="f" style="left:524px;top:412px;width:135px;height:18px;"></div>
<div class="l" style="top:434px;left:474.97px;transform:scaleX(1.0278);transform-origin:0 0;">Produto</div>
<div class="f" style="left:524px;top:432px;width:135px;height:18px;"></div>
<div class="l" style="top:454px;left:490.00px;transform:scaleX(1.0000);transform-origin:0 0;">Nota</div>
<div class="f" style="left:524px;top:451px;width:135px;height:18px;"></div>
<div class="l" style="top:476px;left:455.31px;transform:scaleX(0.9918);transform-origin:0 0;">Peso Liquido</div>
<div class="f" style="left:524px;top:473px;width:135px;height:18px;"></div>
<div class="l" style="top:495px;left:462.98px;transform:scaleX(1.0154);transform-origin:0 0;">Peso Bruto</div>
<div class="f" style="left:524px;top:493px;width:135px;height:18px;"></div>
<svg class="s" shape-rendering="crispEdges" style="left:630px;top:418px" width="33" height="5"><use href="#st" x="0" y="0"/><use href="#st" x="7" y="0"/><use href="#st" x="13" y="0"/><use href="#st" x="20" y="0"/></svg>
<svg class="s" shape-rendering="crispEdges" style="left:623px;top:439px" width="39" height="5"><use href="#st" x="0" y="0"/><use href="#st" x="7" y="0"/><use href="#st" x="13" y="0"/><use href="#st" x="20" y="0"/><use href="#st" x="26" y="0"/></svg>
<svg class="s" shape-rendering="crispEdges" style="left:623px;top:457px" width="39" height="5"><use href="#st" x="0" y="0"/><use href="#st" x="7" y="0"/><use href="#st" x="13" y="0"/><use href="#st" x="20" y="0"/><use href="#st" x="26" y="0"/></svg>
<svg class="s" shape-rendering="crispEdges" style="left:621px;top:481px" width="39" height="5"><use href="#st" x="0" y="0"/><use href="#st" x="7" y="0"/><use href="#st" x="13" y="0"/><use href="#st" x="20" y="0"/><use href="#st" x="26" y="0"/></svg>
<svg class="s" shape-rendering="crispEdges" style="left:616px;top:501px" width="46" height="5"><use href="#st" x="0" y="0"/><use href="#st" x="7" y="0"/><use href="#st" x="13" y="0"/><use href="#st" x="20" y="0"/><use href="#st" x="26" y="0"/><use href="#st" x="33" y="0"/></svg>
<div class="b" style="left:679px;top:479px;width:145px;height:21px;"></div>
<div class="l" style="top:484px;left:695.40px;transform:scaleX(1.0009);transform-origin:0 0;">Motivo Nao Gerou Scm</div>
<div class="b" style="left:679px;top:505px;width:67px;height:20px;"></div>
<div class="l" style="top:509px;left:686.00px;transform:scaleX(1.0294);transform-origin:0 0;">Gerar Scm</div>
<div style="left:226px;top:558px;width:645px;height:20px;background:#ebebeb"></div>
<svg class="s" shape-rendering="crispEdges" style="left:420px;top:565px" width="252" height="5"><use href="#st" x="0" y="0"/><use href="#st" x="7" y="0"/><use href="#st" x="13" y="0"/><use href="#st" x="20" y="0"/><use href="#st" x="27" y="0"/><use href="#st" x="33" y="0"/><use href="#st" x="40" y="0"/><use href="#st" x="46" y="0"/><use href="#st" x="53" y="0"/><use href="#st" x="60" y="0"/><use href="#st" x="66" y="0"/><use href="#st" x="73" y="0"/><use href="#st" x="80" y="0"/><use href="#st" x="86" y="0"/><use href="#st" x="93" y="0"/><use href="#st" x="100" y="0"/><use href="#st" x="106" y="0"/><use href="#st" x="113" y="0"/><use href="#st" x="120" y="0"/><use href="#st" x="126" y="0"/><use href="#st" x="133" y="0"/><use href="#st" x="139" y="0"/><use href="#st" x="146" y="0"/><use href="#st" x="153" y="0"/><use href="#st" x="159" y="0"/><use href="#st" x="166" y="0"/><use href="#st" x="173" y="0"/><use href="#st" x="179" y="0"/><use href="#st" x="186" y="0"/><use href="#st" x="193" y="0"/><use href="#st" x="199" y="0"/><use href="#st" x="206" y="0"/><use href="#st" x="212" y="0"/><use href="#st" x="219" y="0"/><use href="#st" x="226" y="0"/><use href="#st" x="232" y="0"/><use href="#st" x="239" y="0"/></svg>
<div class="b" style="left:227px;top:581px;width:274px;height:22px;"></div>
<div class="l" style="top:586px;left:311.43px;transform:scaleX(0.9705);transform-origin:0 0;">Proximo Numero Nota</div>
<div class="b" style="left:878px;top:559px;width:91px;height:18px;"></div>
<div class="l" style="top:562px;left:886.00px;transform:scaleX(1.0264);transform-origin:0 0;">Ocorrencia Nfe</div>
<div style="left:37px;top:642px;width:115px;height:21px;background:#cdd9ea;border-radius:0 0 5px 5px"></div>
<div class="l" style="top:646px;left:44.30px;transform:scaleX(0.9932);transform-origin:0 0;color:#333;">Gerar NF. Importacao</div>
<div style="left:4px;top:642px;width:31px;height:20px;background:#8eb1da"></div>
<div style="left:1px;top:640px;width:37px;height:24px;border:3px solid #ff0000;border-radius:2px"></div>
<div class="l" style="top:646px;left:10.03px;transform:scaleX(0.9688);transform-origin:0 0;color:#111;">N.F</div>
<div class="ln" style="left:1px;top:665px;width:1297px;height:1px;background:#3d5f8e"></div>
</body></html>
